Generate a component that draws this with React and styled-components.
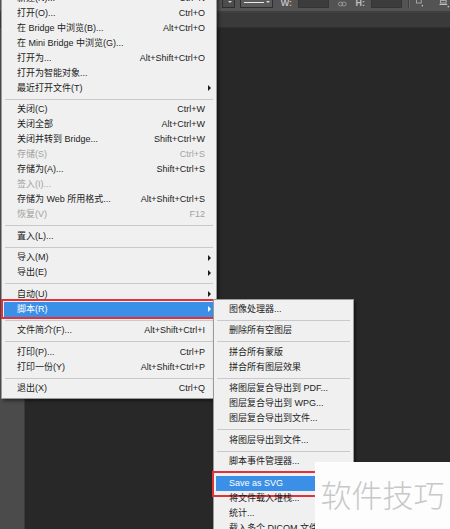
import React from 'react'
import styled, { createGlobalStyle } from 'styled-components'

const GlobalStyle = createGlobalStyle`
  html, body {
    margin: 0;
    padding: 0;
    background: #282828;
  }
  body {
    font-family: "Liberation Sans", "Noto Sans CJK SC", sans-serif;
    overflow: hidden;
  }
`

const Screen = styled.div`
  position: relative;
  width: 450px;
  height: 529px;
  overflow: hidden;
  display: flex;
  flex-direction: column;
  background: #282828;
`

// Options bar -------------------------------------------------------------

const OptionsBar = styled.div`
  height: 13px;
  flex: none;
  background: #535353;
  border-bottom: 2px solid #3f3f3f;
  display: flex;
  align-items: flex-end;
  padding: 0 0 3px 222px;
  box-sizing: border-box;
  overflow: hidden;
`

const DropButton = styled.div`
  width: ${p => p.$w}px;
  height: 11px;
  margin-right: ${p => p.$gap}px;
  box-sizing: border-box;
  border: 1px solid #2e2e2e;
  border-top: none;
  background: ${p => (p.$light ? '#5a5a5a' : '#4d4d4d')};
  display: flex;
  align-items: center;
  justify-content: flex-end;
  padding: 0 2px 0 3px;
  gap: 2px;
`

const StrokeLine = styled.span`
  flex: 1;
  height: 1px;
  background: #e8e8e8;
`

const Caret = styled.span`
  width: 0;
  height: 0;
  border-left: 2px solid transparent;
  border-right: 2px solid transparent;
  border-top: 2px solid #d8d8d8;
`

const FieldLabel = styled.span`
  font-size: 9px;
  font-weight: bold;
  color: #bdbdbd;
  line-height: 9px;
  margin-right: 6px;
`

const Field = styled.div`
  width: 30px;
  height: 10px;
  background: #3c3c3c;
  border: 1px solid #353535;
  border-top: none;
  margin-right: ${p => p.$gap}px;
`

const BarDivider = styled.div`
  width: 1px;
  height: 12px;
  background: #3e3e3e;
  border-right: 1px solid #646464;
  margin: 0 5px 0 6px;
`

const BarIcon = styled.svg`
  display: block;
  margin-right: ${p => p.$gap}px;
`

const TabStrip = styled.div`
  height: 14px;
  flex: none;
  background: #3a3a3a;
  border-bottom: 1px solid #303030;
`

const Workspace = styled.div`
  flex: 1;
  display: flex;
`

const ToolColumn = styled.div`
  width: 24px;
  flex: none;
  background: #4b4b4b;
  border-right: 1px solid #3a3a3a;
`

const Canvas = styled.div`
  flex: 1;
  background: #282828;
`

// Menus -------------------------------------------------------------------

const Menu = styled.div`
  position: absolute;
  left: ${p => p.$left}px;
  top: ${p => p.$top}px;
  width: ${p => p.$width}px;
  box-sizing: border-box;
  padding: 2px;
  background: #f0f0f0;
  border: 1px solid #9a9a9a;
  box-shadow: 2px 2px 3px rgba(0, 0, 0, 0.45);
  font-size: 9px;
  z-index: ${p => p.$z};
`

const Row = styled.div`
  position: relative;
  height: 15px;
  display: grid;
  grid-template-columns: 1fr auto 9px;
  align-items: center;
  padding-left: 13px;
  color: ${p => (p.$active ? '#ffffff' : p.$disabled ? '#a2a2a2' : '#1c1c1c')};
  background: ${p => (p.$active ? '#3b8fe7' : 'transparent')};
  white-space: nowrap;
`

const Label = styled.span`
  line-height: 15px;
`

const Shortcut = styled.span`
  line-height: 15px;
  text-align: right;
`

const Arrow = styled.span`
  justify-self: center;
  width: 0;
  height: 0;
  border-top: 3px solid transparent;
  border-bottom: 3px solid transparent;
  border-left: 3px solid ${p => (p.$active ? '#ffffff' : '#1c1c1c')};
`

const Separator = styled.div`
  height: 1px;
  margin: 3px 1px 2.5px;
  background: #c9c9c9;
`

// red callout drawn around a highlighted entry
const Callout = styled.div`
  position: absolute;
  top: -${p => p.$t}px;
  bottom: -${p => p.$b}px;
  left: -${p => p.$l}px;
  right: -${p => p.$r}px;
  border: 2px solid #e0323c;
  pointer-events: none;
`

const Watermark = styled.div`
  position: absolute;
  right: 0;
  bottom: 0;
  width: 135px;
  height: 67px;
  background: #fdfdfd;
  display: flex;
  align-items: center;
  justify-content: center;
  z-index: 5;
  font-family: "Noto Sans CJK SC", sans-serif;
  font-weight: 300;
  font-size: 31px;
  color: #c8c8c8;
  padding-bottom: 4px;
  box-sizing: border-box;
`

const fileItems = [
  { label: '新建(N)...', key: 'Ctrl+N' },
  { label: '打开(O)...', key: 'Ctrl+O' },
  { label: '在 Bridge 中浏览(B)...', key: 'Alt+Ctrl+O' },
  { label: '在 Mini Bridge 中浏览(G)...' },
  { label: '打开为...', key: 'Alt+Shift+Ctrl+O' },
  { label: '打开为智能对象...' },
  { label: '最近打开文件(T)', sub: true },
  '-',
  { label: '关闭(C)', key: 'Ctrl+W' },
  { label: '关闭全部', key: 'Alt+Ctrl+W' },
  { label: '关闭并转到 Bridge...', key: 'Shift+Ctrl+W' },
  { label: '存储(S)', key: 'Ctrl+S', disabled: true },
  { label: '存储为(A)...', key: 'Shift+Ctrl+S' },
  { label: '签入(I)...', disabled: true },
  { label: '存储为 Web 所用格式...', key: 'Alt+Shift+Ctrl+S' },
  { label: '恢复(V)', key: 'F12', disabled: true },
  '-',
  { label: '置入(L)...' },
  '-',
  { label: '导入(M)', sub: true },
  { label: '导出(E)', sub: true },
  '-',
  { label: '自动(U)', sub: true },
  { label: '脚本(R)', sub: true, active: true, callout: [2.5, 2.5, 3, 3] },
  '-',
  { label: '文件简介(F)...', key: 'Alt+Shift+Ctrl+I' },
  '-',
  { label: '打印(P)...', key: 'Ctrl+P' },
  { label: '打印一份(Y)', key: 'Alt+Shift+Ctrl+P' },
  '-',
  { label: '退出(X)', key: 'Ctrl+Q' },
]

const scriptItems = [
  { label: '图像处理器...' },
  '-',
  { label: '删除所有空图层' },
  '-',
  { label: '拼合所有蒙版' },
  { label: '拼合所有图层效果' },
  '-',
  { label: '将图层复合导出到 PDF...' },
  { label: '图层复合导出到 WPG...' },
  { label: '图层复合导出到文件...' },
  '-',
  { label: '将图层导出到文件...' },
  '-',
  { label: '脚本事件管理器...' },
  '-',
  { label: 'Save as SVG', active: true, callout: [5, 6, 4, 4] },
  { label: '将文件载入堆栈...' },
  { label: '统计...' },
  { label: '载入多个 DICOM 文件...' },
]

const MenuList = ({ items }) =>
  items.map((item, i) => {
    if (item === '-') return <Separator key={i} />
    return (
      <Row key={i} $active={item.active} $disabled={item.disabled}>
        <Label>{item.label}</Label>
        <Shortcut>{item.key || ''}</Shortcut>
        {item.sub ? <Arrow $active={item.active} /> : <span />}
        {item.callout && (
          <Callout
            $t={item.callout[0]}
            $b={item.callout[1]}
            $l={item.callout[2]}
            $r={item.callout[3]}
          />
        )}
      </Row>
    )
  })

const LinkIcon = () => (
  <BarIcon $gap={9} width="9" height="7" viewBox="0 0 9 7">
    <rect x="0.5" y="1" width="4.5" height="4" rx="2" fill="none" stroke="#9a9a9a" strokeWidth="1" />
    <rect x="4" y="1" width="4.5" height="4" rx="2" fill="none" stroke="#9a9a9a" strokeWidth="1" />
  </BarIcon>
)

const PathIcon = () => (
  <BarIcon $gap={16} width="9" height="11" viewBox="0 0 9 11">
    <rect x="1.5" y="0" width="5" height="6" fill="none" stroke="#a8a8a8" strokeWidth="1" />
    <rect x="7" y="8" width="1.5" height="1.5" fill="#c8c8c8" />
  </BarIcon>
)

const AlignIcon = () => (
  <BarIcon $gap={0} width="11" height="11" viewBox="0 0 11 11">
    <rect x="1" y="0" width="5" height="2" fill="none" stroke="#b0b0b0" strokeWidth="1" />
    <rect x="1.5" y="3.5" width="6" height="2.5" fill="none" stroke="#b0b0b0" strokeWidth="1" />
    <line x1="0.5" y1="7.5" x2="8.5" y2="7.5" stroke="#d0d0d0" strokeWidth="1" />
    <rect x="9" y="9" width="1.5" height="1.5" fill="#c8c8c8" />
  </BarIcon>
)

export default function App() {
  return (
    <Screen>
      <GlobalStyle />
      <OptionsBar>
        <DropButton $w={13} $gap={5}>
          <Caret />
        </DropButton>
        <DropButton $w={34} $gap={8} $light>
          <StrokeLine />
          <Caret />
        </DropButton>
        <FieldLabel>W:</FieldLabel>
        <Field $gap={9} />
        <LinkIcon />
        <FieldLabel>H:</FieldLabel>
        <Field $gap={0} />
        <BarDivider />
        <PathIcon />
        <AlignIcon />
      </OptionsBar>
      <TabStrip />
      <Workspace>
        <ToolColumn />
        <Canvas />
      </Workspace>

      <Menu $left={1} $top={-12.5} $width={216} $z={2}>
        <MenuList items={fileItems} />
      </Menu>
      <Menu $left={213} $top={298.5} $width={141} $z={3}>
        <MenuList items={scriptItems} />
      </Menu>

      <Watermark>软件技巧</Watermark>
    </Screen>
  )
}
